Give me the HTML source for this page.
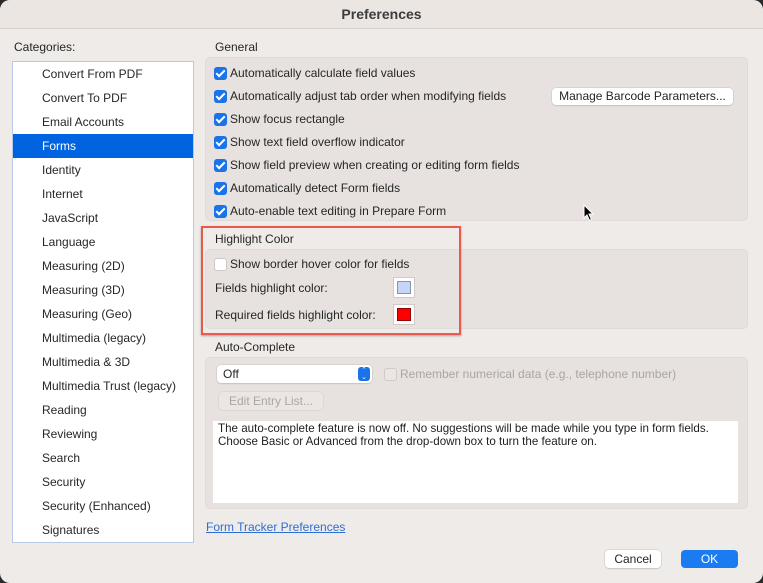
<!DOCTYPE html>
<html><head><style>
*{margin:0;padding:0;box-sizing:border-box}
body{width:763px;height:583px;background:#2a2a2a;font-family:"Liberation Sans",sans-serif;font-size:12px;color:#262626;position:relative;overflow:hidden}
#win{position:absolute;left:0;top:0;width:763px;height:583px;background:#efebe8;border-radius:10px;overflow:hidden}
.a{position:absolute;white-space:nowrap}
.title{left:0;top:0;width:763px;height:29px;background:#ece6e3;border-bottom:1px solid #d8d2cf;text-align:center;line-height:28px;font-weight:bold;font-size:14px;color:#3c3c3c}
.list{left:12px;top:61px;width:182px;height:482px;background:#fff;border:1px solid #b7c8e8}
.item{position:absolute;left:0;width:180px;height:24px;line-height:24px;padding-left:29px}
.sel{background:#0064e1;color:#fff}
.grp{background:#e7e2df;border:1px solid #e0dbd8;border-radius:5px}
.cb{position:absolute;width:13px;height:13px;border-radius:3px;background:#1a73e8}
.cb::after{content:"";position:absolute;left:4px;top:1px;width:3px;height:7px;border:solid #fff;border-width:0 2px 2px 0;transform:rotate(45deg)}
.cbe{position:absolute;width:13px;height:13px;border-radius:3px;background:#fff;border:1px solid #cfcac7}
.btn{background:#fff;border-radius:4px;box-shadow:0 0 0 0.5px #c8c3c0,0 1px 1px rgba(0,0,0,.15);text-align:center}
</style></head><body><div id="win">
<div class="a title">Preferences</div>
<div class="a" style="left:14px;top:40px">Categories:</div>
<div class="a list">
<div class="item" style="top:0">Convert From PDF</div>
<div class="item" style="top:24px">Convert To PDF</div>
<div class="item" style="top:48px">Email Accounts</div>
<div class="item sel" style="top:72px">Forms</div>
<div class="item" style="top:96px">Identity</div>
<div class="item" style="top:120px">Internet</div>
<div class="item" style="top:144px">JavaScript</div>
<div class="item" style="top:168px">Language</div>
<div class="item" style="top:192px">Measuring (2D)</div>
<div class="item" style="top:216px">Measuring (3D)</div>
<div class="item" style="top:240px">Measuring (Geo)</div>
<div class="item" style="top:264px">Multimedia (legacy)</div>
<div class="item" style="top:288px">Multimedia &amp; 3D</div>
<div class="item" style="top:312px">Multimedia Trust (legacy)</div>
<div class="item" style="top:336px">Reading</div>
<div class="item" style="top:360px">Reviewing</div>
<div class="item" style="top:384px">Search</div>
<div class="item" style="top:408px">Security</div>
<div class="item" style="top:432px">Security (Enhanced)</div>
<div class="item" style="top:456px">Signatures</div>
</div>

<div class="a" style="left:215px;top:40px">General</div>
<div class="a grp" style="left:205px;top:57px;width:543px;height:164px"></div>
<div class="cb" style="left:214px;top:67px"></div><div class="a" style="left:230px;top:66px">Automatically calculate field values</div>
<div class="cb" style="left:214px;top:90px"></div><div class="a" style="left:230px;top:89px">Automatically adjust tab order when modifying fields</div>
<div class="cb" style="left:214px;top:113px"></div><div class="a" style="left:230px;top:112px">Show focus rectangle</div>
<div class="cb" style="left:214px;top:136px"></div><div class="a" style="left:230px;top:135px">Show text field overflow indicator</div>
<div class="cb" style="left:214px;top:159px"></div><div class="a" style="left:230px;top:158px">Show field preview when creating or editing form fields</div>
<div class="cb" style="left:214px;top:182px"></div><div class="a" style="left:230px;top:181px">Automatically detect Form fields</div>
<div class="cb" style="left:214px;top:205px"></div><div class="a" style="left:230px;top:204px">Auto-enable text editing in Prepare Form</div>
<div class="a btn" style="left:552px;top:88px;width:181px;height:17px;line-height:17px">Manage Barcode Parameters...</div>
<svg class="a" style="left:583px;top:204px" width="12" height="18" viewBox="0 0 12 18"><path d="M1 1 L1 14 L4 11 L6.5 16.5 L8.5 15.5 L6 10 L10 10 Z" fill="#000" stroke="#fff" stroke-width="1"/></svg>

<div class="a" style="left:215px;top:232px">Highlight Color</div>
<div class="a grp" style="left:205px;top:249px;width:543px;height:80px"></div>
<div class="cbe" style="left:214px;top:258px"></div><div class="a" style="left:230px;top:257px">Show border hover color for fields</div>
<div class="a" style="left:215px;top:281px">Fields highlight color:</div>
<div class="a" style="left:393px;top:277px;width:22px;height:21px;background:#fff;border:1px solid #cfcac7"><div style="margin:3px;width:14px;height:13px;background:#c5d4f7;border:1px solid #8a96b0"></div></div>
<div class="a" style="left:215px;top:308px">Required fields highlight color:</div>
<div class="a" style="left:393px;top:304px;width:22px;height:21px;background:#fff;border:1px solid #cfcac7"><div style="margin:3px;width:14px;height:13px;background:#f00;border:1px solid #900"></div></div>
<div class="a" style="left:201px;top:226px;width:260px;height:109px;border:2px solid #ea5a4c;box-shadow:0 1px 2px rgba(0,0,0,.3)"></div>

<div class="a" style="left:215px;top:340px">Auto-Complete</div>
<div class="a grp" style="left:205px;top:357px;width:543px;height:152px"></div>
<div class="a btn" style="left:217px;top:365px;width:155px;height:18px;line-height:18px;text-align:left;padding-left:6px">Off</div>
<div class="a" style="left:358px;top:367px;width:12px;height:14px;background:#1a73e8;border-radius:3px;color:#fff;font-size:7px;line-height:7px;text-align:center">⌃<br>⌄</div>
<div class="cbe" style="left:384px;top:368px;background:#ebe6e3"></div><div class="a" style="left:400px;top:367px;color:#a9a5a3">Remember numerical data (e.g., telephone number)</div>
<div class="a" style="left:219px;top:392px;width:104px;height:18px;line-height:18px;background:#ebe6e3;border-radius:4px;box-shadow:0 0 0 0.5px #d0cbc8;text-align:center;color:#aaa6a3">Edit Entry List...</div>
<div class="a" style="left:213px;top:421px;width:525px;height:82px;background:#fff;padding:1px 0 0 5px;font-size:11.6px;line-height:13px;white-space:normal;color:#1e1e1e">The auto-complete feature is now off. No suggestions will be made while you type in form fields. Choose Basic or Advanced from the drop-down box to turn the feature on.</div>

<div class="a" style="left:206px;top:520px;color:#2a6fd6;text-decoration:underline">Form Tracker Preferences</div>
<div class="a btn" style="left:605px;top:550px;width:56px;height:18px;line-height:18px">Cancel</div>
<div class="a" style="left:681px;top:550px;width:57px;height:18px;line-height:18px;background:#1a7cf0;color:#fff;border-radius:4px;text-align:center">OK</div>
</div></body></html>
